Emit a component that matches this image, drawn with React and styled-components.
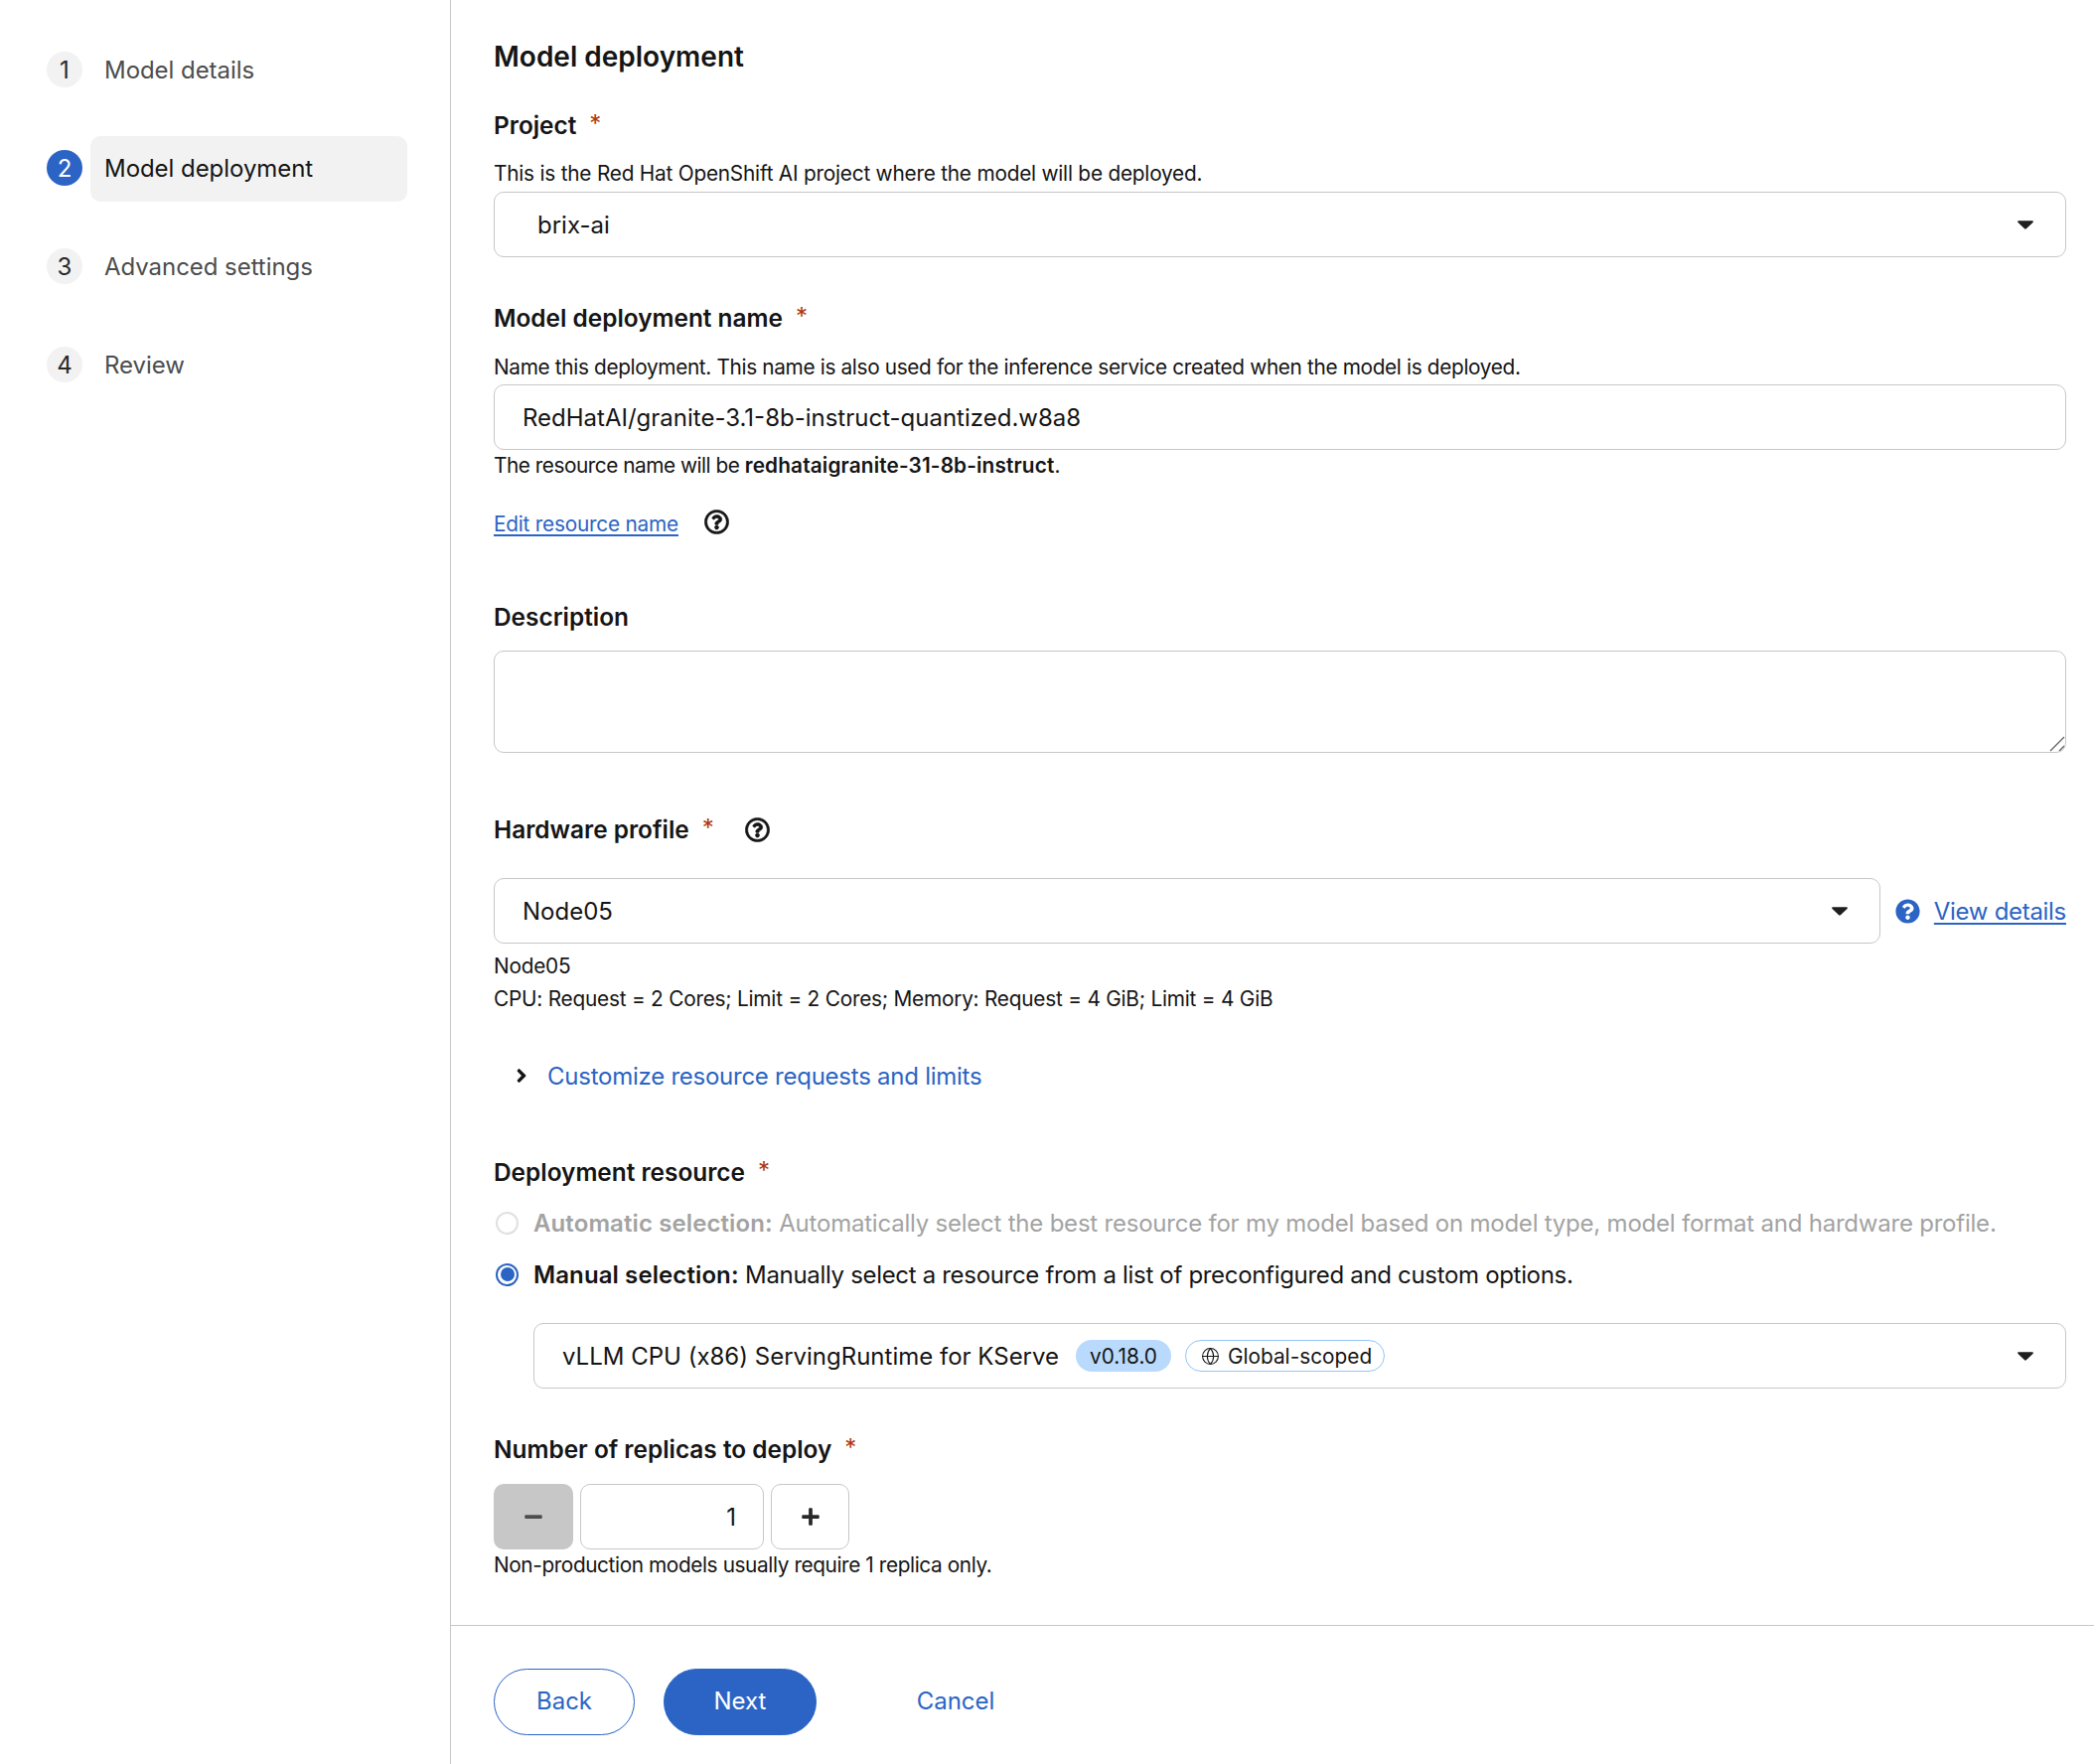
import styled, { createGlobalStyle } from "styled-components";
import { FaRegQuestionCircle, FaQuestionCircle, FaAngleRight, FaPlus, FaMinus } from "react-icons/fa";
import { Globe } from "lucide-react";

const blue = "#2b64c4";
const line = "#c7c7c7";

const Global = createGlobalStyle`
  html, body { margin: 0; padding: 0; background: #fff; }
  body {
    font-family: "Inter", "Liberation Sans", sans-serif;
    color: #151515;
    -webkit-font-smoothing: antialiased;
  }
`;
const Page = styled.div`
  width: 2108px;
  height: 1776px;
  display: grid;
  grid-template-columns: 454px 1fr;
  overflow: hidden;
`;
const Side = styled.nav`
  border-right: 1px solid ${line};
  padding: 37px 43px 0 47px;
  display: flex;
  flex-direction: column;
  gap: 33px;
`;
const Step = styled.div`
  display: flex;
  align-items: center;
  gap: 8px;
  height: 66px;
`;
const StepNum = styled.span`
  width: 36px;
  height: 36px;
  border-radius: 50%;
  flex: none;
  display: flex;
  align-items: center;
  justify-content: center;
  font-size: 24px;
  background: ${(p) => (p.$active ? blue : "#f2f2f2")};
  color: ${(p) => (p.$active ? "#fff" : "#292929")};
`;
const StepName = styled.span`
  flex: 1;
  height: 66px;
  margin-top: 2px;
  line-height: 66px;
  padding-left: 14px;
  border-radius: 10px;
  font-size: 24px;
  letter-spacing: -0.05px;
  background: ${(p) => (p.$active ? "#f2f2f2" : "transparent")};
  color: ${(p) => (p.$active ? "#151515" : "#4d4d4d")};
`;
const Main = styled.main`
  display: flex;
  flex-direction: column;
`;
const Form = styled.section`
  flex: 1;
  padding: 37px 28px 0 43px;
`;
const Heading = styled.h1`
  margin: 0;
  font-size: 28px;
  line-height: 40px;
  font-weight: 600;
`;
const Label = styled.div`
  margin-top: ${(p) => p.$top}px;
  display: flex;
  align-items: center;
  font-size: 24.4px;
  line-height: 34px;
  font-weight: 600;
`;
const Req = styled.span`
  color: #b1380b;
  font-size: 24px;
  font-weight: 400;
  margin-left: 13px;
  position: relative;
  top: -1px;
`;
const LabelHelp = styled(FaRegQuestionCircle)`
  margin-left: 31px;
`;
const Help = styled.div`
  margin-top: ${(p) => p.$top || 0}px;
  font-size: 20.8px;
  letter-spacing: ${(p) => p.$track ?? -0.22}px;
  line-height: 32px;
  b { font-weight: 600; letter-spacing: 0.13px; }
`;
const Box = styled.div`
  margin-top: ${(p) => p.$top || 0}px;
  margin-left: ${(p) => p.$left || 0}px;
  flex: 1;
  height: 66px;
  box-sizing: border-box;
  border: 1px solid ${line};
  border-radius: 10px;
  display: flex;
  align-items: center;
  padding: 0 32px 0 ${(p) => p.$pad}px;
  font-size: 24px;
`;
const BoxText = styled.span`
  flex: 1;
  display: flex;
  align-items: center;
`;
const Caret = () => (
  <svg width="16" height="9" viewBox="0 0 16 9">
    <path d="M1.2 0.3h13.6c1 0 1.4 1 .7 1.6L8.8 8.3c-.5.5-1.2.5-1.7 0L.5 1.9C-.2 1.3.2.3 1.2.3z" fill="#1f1f1f" />
  </svg>
);
const EditRow = styled.div`
  margin-top: 26px;
  display: flex;
  align-items: center;
  gap: 26px;
  height: 32px;
  svg { margin-bottom: 4px; }
`;
const Link = styled.a`
  color: ${blue};
  text-decoration: underline;
  text-underline-offset: 3px;
  font-size: ${(p) => p.$size}px;
  letter-spacing: ${(p) => p.$track}px;
`;
const AreaWrap = styled.div`
  margin-top: 17px;
  position: relative;
  height: 103px;
`;
const Area = styled.textarea`
  display: block;
  width: 100%;
  height: 100%;
  box-sizing: border-box;
  border: 1px solid ${line};
  border-radius: 10px;
  resize: none;
  outline: none;
`;
const Grip = styled.svg`
  position: absolute;
  right: 1px;
  bottom: 1px;
`;
const ProfileRow = styled.div`
  margin-top: 32px;
  display: flex;
  align-items: center;
`;
const ViewDetails = styled.div`
  display: flex;
  align-items: center;
  gap: 14px;
  margin-left: 15px;
  color: ${blue};
  white-space: nowrap;
`;
const Expand = styled.div`
  margin-top: 45px;
  padding-left: 17px;
  display: flex;
  align-items: center;
  gap: 15px;
  height: 32px;
  font-size: 24px;
  letter-spacing: -0.25px;
  color: ${blue};
`;
const RadioRow = styled.div`
  margin-top: ${(p) => p.$top}px;
  display: flex;
  align-items: center;
  gap: 15px;
  height: 32px;
  font-size: 24px;
  letter-spacing: ${(p) => p.$track}px;
  color: ${(p) => (p.$off ? "#a3a3a3" : "#151515")};
  b { font-weight: 600; letter-spacing: 0.1px; }
`;
const Radio = styled.span`
  width: 23px;
  height: 23px;
  margin-left: 2px;
  box-sizing: border-box;
  border-radius: 50%;
  flex: none;
  display: flex;
  align-items: center;
  justify-content: center;
  border: ${(p) => (p.$off ? `2px solid #e0e0e0` : `2px solid ${blue}`)};
  &::after {
    content: "";
    width: 14px;
    height: 14px;
    border-radius: 50%;
    background: ${(p) => (p.$off ? "transparent" : blue)};
  }
`;
const Tag = styled.span`
  height: 32px;
  box-sizing: border-box;
  border-radius: 16px;
  display: inline-flex;
  align-items: center;
  gap: 8px;
  padding: 0 ${(p) => (p.$fill ? 14 : 12)}px 0 ${(p) => (p.$fill ? 14 : 15)}px;
  font-size: 20.8px;
  background: ${(p) => (p.$fill ? "#b9dafc" : "#fff")};
  border: ${(p) => (p.$fill ? "none" : "1px solid #92c5f9")};
  margin-left: ${(p) => p.$gap}px;
`;
const Stepper = styled.div`
  margin-top: 18px;
  display: flex;
  gap: 7px;
  height: 66px;
`;
const StepBtn = styled.div`
  width: ${(p) => p.$w}px;
  box-sizing: border-box;
  border-radius: 10px;
  display: flex;
  align-items: center;
  justify-content: center;
  font-size: 20px;
  background: ${(p) => (p.$off ? line : "#fff")};
  border: ${(p) => (p.$off ? "none" : `1px solid ${line}`)};
  color: ${(p) => (p.$off ? "#4d4d4d" : "#292929")};
`;
const StepValue = styled.div`
  width: 185px;
  box-sizing: border-box;
  border: 1px solid ${line};
  border-radius: 10px;
  display: flex;
  align-items: center;
  justify-content: flex-end;
  padding-right: 27px;
  font-size: 24px;
`;
const Footer = styled.footer`
  height: 140px;
  box-sizing: border-box;
  border-top: 1px solid ${line};
  padding: 43px 0 0 43px;
  display: flex;
  align-items: flex-start;
`;
const Btn = styled.button`
  height: 67px;
  width: ${(p) => p.$w}px;
  margin-right: ${(p) => p.$after}px;
  border-radius: 34px;
  font: inherit;
  font-size: 24px;
  line-height: 63px;
  padding: 0 0 2px;
  background: ${(p) => (p.$primary ? blue : "#fff")};
  color: ${(p) => (p.$primary ? "#fff" : blue)};
  border: ${(p) => (p.$ghost ? "none" : `1px solid ${blue}`)};
`;

const steps = ["Model details", "Model deployment", "Advanced settings", "Review"];

export default function App() {
  return (
    <Page>
      <Global />
      <Side>
        {steps.map((s, i) => (
          <Step key={s}>
            <StepNum $active={i === 1}>{i + 1}</StepNum>
            <StepName $active={i === 1}>{s}</StepName>
          </Step>
        ))}
      </Side>
      <Main>
        <Form>
          <Heading>Model deployment</Heading>
          <Label $top={32}>Project<Req>*</Req></Label>
          <Help $top={16}>This is the Red Hat OpenShift AI project where the model will be deployed.</Help>
          <Box $top={2} $pad={43}><BoxText>brix-ai</BoxText><Caret /></Box>

          <Label $top={44}>Model deployment name<Req>*</Req></Label>
          <Help $top={17} $track={-0.35}>Name this deployment. This name is also used for the inference service created when the model is deployed.</Help>
          <Box $top={1} $pad={28}><BoxText>RedHatAI/granite-3.1-8b-instruct-quantized.w8a8</BoxText></Box>
          <Help $track={-0.48}>The resource name will be <b>redhataigranite-31-8b-instruct</b>.</Help>
          <EditRow>
            <Link $size={20.8} $track={-0.22}>Edit resource name</Link>
            <FaRegQuestionCircle size={25} strokeWidth={12} />
          </EditRow>

          <Label $top={61}>Description</Label>
          <AreaWrap>
            <Area />
            <Grip width="16" height="16" viewBox="0 0 16 16">
              <path d="M1 15L15 1M10 15l5-5" stroke="#666" strokeWidth="1.4" />
            </Grip>
          </AreaWrap>

          <Label $top={60}>Hardware profile<Req>*</Req><LabelHelp size={25} strokeWidth={12} /></Label>
          <ProfileRow>
            <Box $pad={28}><BoxText>Node05</BoxText><Caret /></Box>
            <ViewDetails>
              <FaQuestionCircle size={25} />
              <Link $size={24} $track={-0.3}>View details</Link>
            </ViewDetails>
          </ProfileRow>
          <Help $top={7}>Node05</Help>
          <Help $top={1}>CPU: Request = 2 Cores; Limit = 2 Cores; Memory: Request = 4 GiB; Limit = 4 GiB</Help>
          <Expand>
            <FaAngleRight size={22} color="#151515" />
            Customize resource requests and limits
          </Expand>

          <Label $top={64}>Deployment resource<Req>*</Req></Label>
          <RadioRow $off $top={18} $track={-0.22}>
            <Radio $off />
            <span><b>Automatic selection:</b> Automatically select the best resource for my model based on model type, model format and hardware profile.</span>
          </RadioRow>
          <RadioRow $top={20} $track={-0.32}>
            <Radio />
            <span><b>Manual selection:</b> Manually select a resource from a list of preconfigured and custom options.</span>
          </RadioRow>
          <Box $top={33} $left={40} $pad={28}>
            <BoxText>
              vLLM CPU (x86) ServingRuntime for KServe
              <Tag $fill $gap={17}>v0.18.0</Tag>
              <Tag $gap={14}><Globe size={19} strokeWidth={1.3} />Global-scoped</Tag>
            </BoxText>
            <Caret />
          </Box>

          <Label $top={44}>Number of replicas to deploy<Req>*</Req></Label>
          <Stepper>
            <StepBtn $w={80} $off><FaMinus /></StepBtn>
            <StepValue>1</StepValue>
            <StepBtn $w={79}><FaPlus /></StepBtn>
          </Stepper>
          <Help $track={-0.4}>Non-production models usually require 1 replica only.</Help>
        </Form>
        <Footer>
          <Btn $w={142} $after={29}>Back</Btn>
          <Btn $w={154} $after={83} $primary>Next</Btn>
          <Btn $w={114} $ghost>Cancel</Btn>
        </Footer>
      </Main>
    </Page>
  );
}
